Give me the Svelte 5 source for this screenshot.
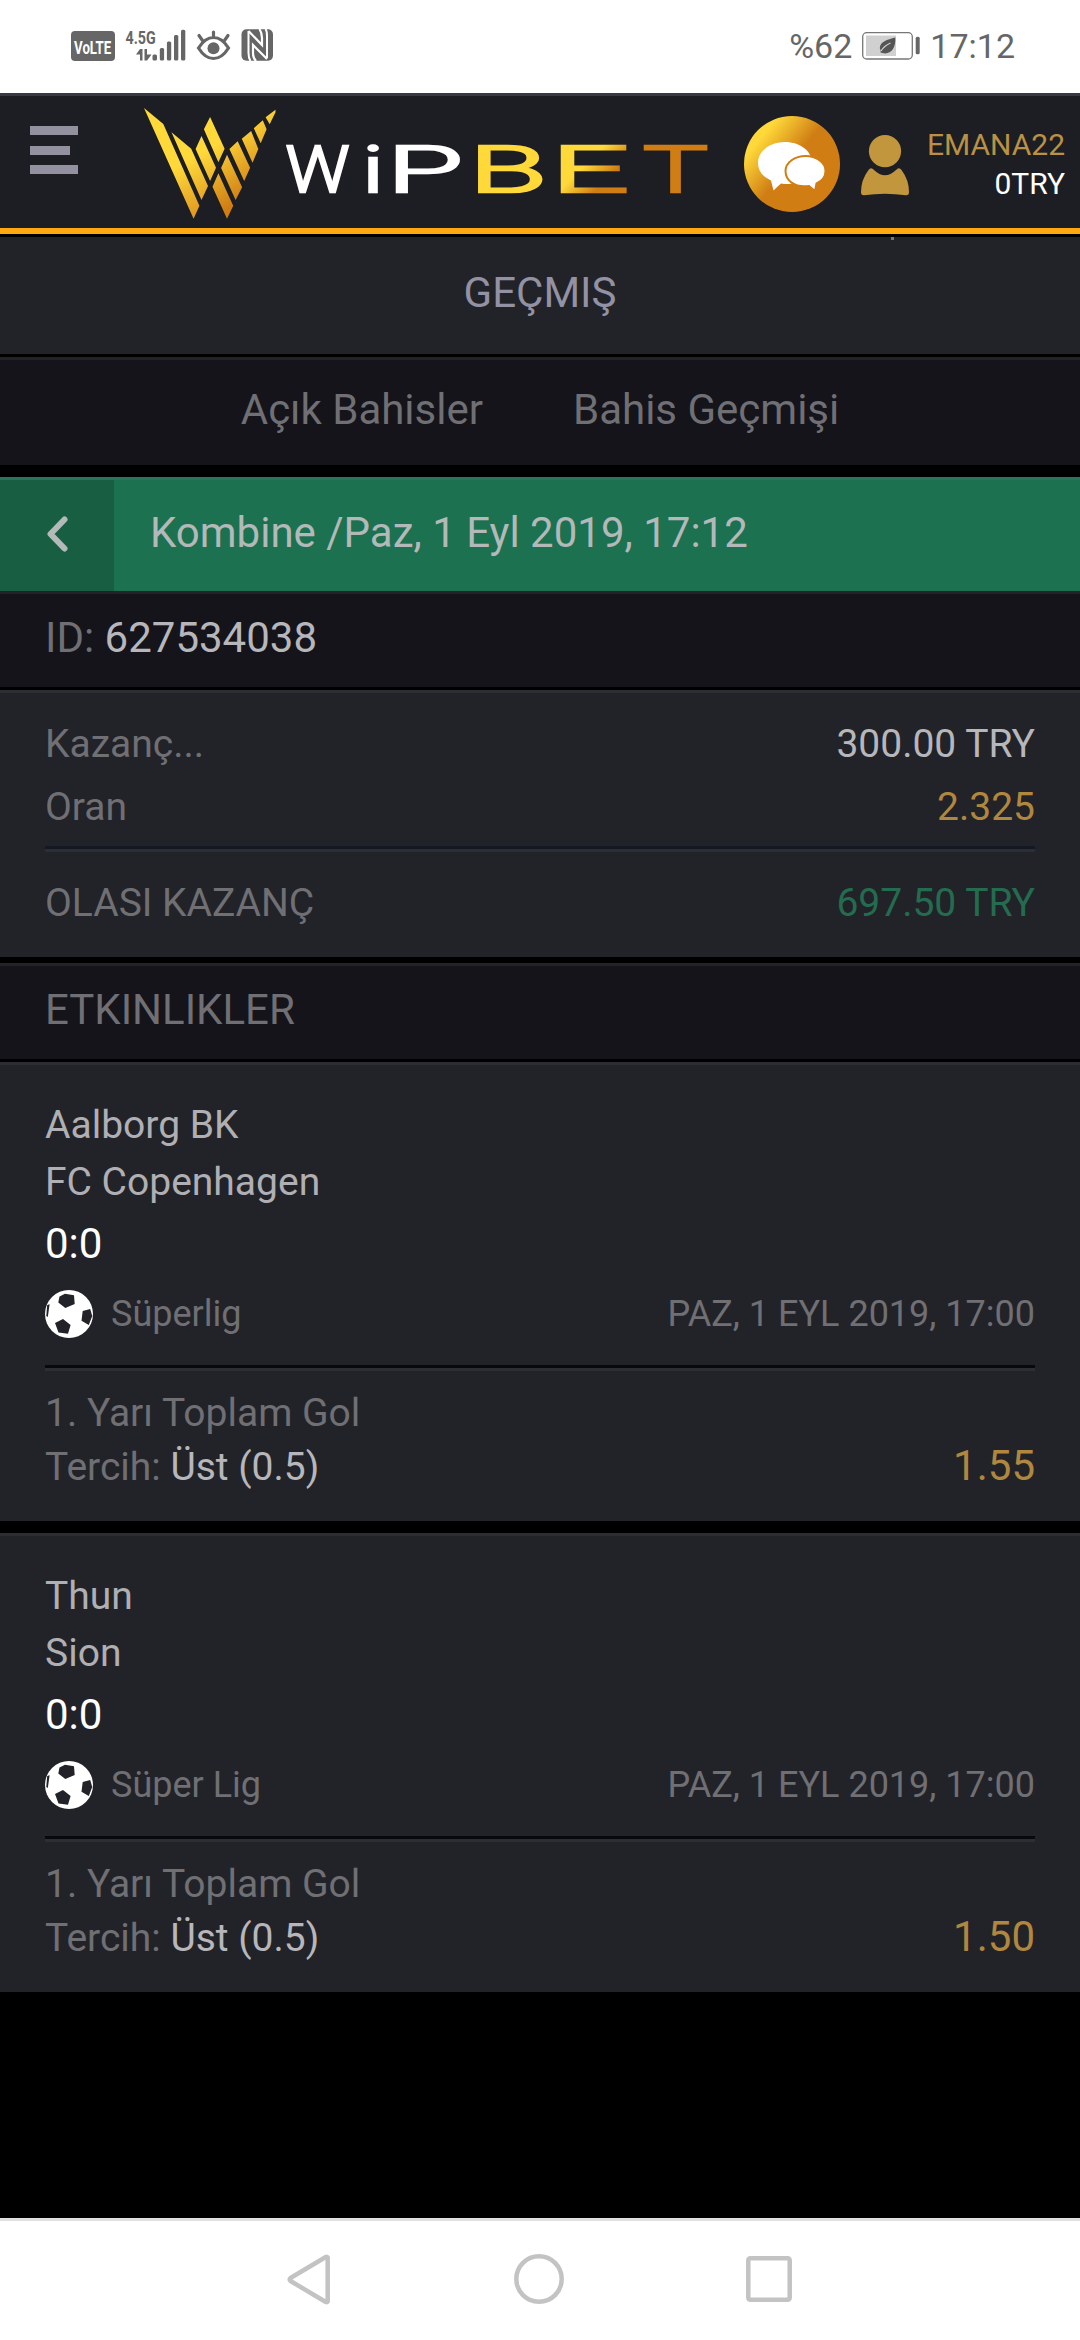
<script lang="ts">
  type Event = {
    home: string;
    away: string;
    score: string;
    league: string;
    date: string;
    market: string;
    pick: string;
    odds: string;
  };

  const tabs = ["Açık Bahisler", "Bahis Geçmişi"];

  const events: Event[] = [
    {
      home: "Aalborg BK",
      away: "FC Copenhagen",
      score: "0:0",
      league: "Süperlig",
      date: "PAZ, 1 EYL 2019, 17:00",
      market: "1. Yarı Toplam Gol",
      pick: "Üst (0.5)",
      odds: "1.55",
    },
    {
      home: "Thun",
      away: "Sion",
      score: "0:0",
      league: "Süper Lig",
      date: "PAZ, 1 EYL 2019, 17:00",
      market: "1. Yarı Toplam Gol",
      pick: "Üst (0.5)",
      odds: "1.50",
    },
  ];

  // x, width and fill of every letter in the wordmark
  const letters = [
    { char: "W", x: 141.5, width: 64, fill: "#fff" },
    { char: "i", x: 218, width: 22, fill: "#fff" },
    { char: "P", x: 243, width: 76, fill: "#fff" },
    { char: "B", x: 325, width: 78, fill: "#ffd93a" },
    { char: "E", x: 407, width: 78, fill: "url(#gold-e)" },
    { char: "T", x: 499, width: 65, fill: "#d07e14" },
  ];
</script>

<div class="screen">
  <div class="status-bar">
    <svg class="status-icons" width="204" height="42" viewBox="70 20 204 42">
      <rect x="71" y="31" width="44" height="30" rx="4" fill="#666" />
      <text class="volte" transform="translate(74 53.500) scale(.7 1)">VoLTE</text>
      <text class="network" transform="translate(125.500 43.500) scale(.75 1)">4.5G</text>
      <g fill="#666">
        <path d="M140 49h2.500v11.500h-2.500v-6h-4zM144.500 49h2.500v5.500h4.500l-4.500 6h-2.500z" />
        <rect x="152.500" y="54.500" width="4.500" height="6" rx="1.500" />
        <rect x="159.800" y="48" width="4.300" height="12.500" rx="1.500" />
        <rect x="166.900" y="41.500" width="4.300" height="19" rx="1.500" />
        <rect x="174" y="35" width="4.300" height="25.500" rx="1.500" />
        <rect x="181" y="29.700" width="4.300" height="30.800" rx="1.500" />
        <circle cx="213.500" cy="48.300" r="6" />
      </g>
      <path
        d="M198.500 48Q205 37.500 213.500 37.500T228.500 48Q222 58.500 213.500 58.500T198.500 48zM213.500 37v-5M202.500 40.500l-3.500-5M224.500 40.500l3.500-5"
        fill="none" stroke="#666" stroke-width="3.200" stroke-linecap="round" />
      <rect x="241.500" y="29.300" width="31.500" height="31.400" rx="5" fill="#666" />
      <path
        d="M248.500 31V53Q248.500 58 250.500 61M265.500 29Q267 31 267 36V58"
        fill="none" stroke="#fff" stroke-width="2" />
      <path d="M248.500 31L262 45V38Q262 33 259.500 29M267 59L253 45V53Q253 58 256 61" fill="none" stroke="#fff" stroke-width="2.200" />
    </svg>
    <div class="status-right">
      <span>%62</span>
      <svg width="58" height="28" viewBox="0 0 58 28">
        <rect x=".7" y=".7" width="49.600" height="26.300" rx="4" fill="none" stroke="#777" stroke-width="1.300" />
        <rect x="4" y="3.500" width="30" height="20.500" fill="#d0d0d0" />
        <rect x="53.700" y="4.800" width="4" height="17.400" rx="1.500" fill="#666" />
        <path d="M33.300 5.500C25 7.500 18 10 17.800 16C18 17 18.500 18 18.700 18.500L18.500 20.500L20.500 21C28 23 34 17 33.300 5.500z" fill="#555" />
        <path d="M19 19Q22 14 28.500 11" fill="none" stroke="#d0d0d0" stroke-width="1.200" />
      </svg>
      <span>17:12</span>
    </div>
  </div>

  <header>
    <div class="burger"><i></i><i></i><i></i></div>

    <svg class="logo" width="566" height="112" viewBox="0 0 566 112">
      <defs>
        <linearGradient id="gold" gradientUnits="userSpaceOnUse" x1="58" y1="42" x2="92" y2="94">
          <stop offset="0" stop-color="#ffd93a" />
          <stop offset="1" stop-color="#d07e14" />
        </linearGradient>
        <linearGradient id="gold-left" gradientUnits="userSpaceOnUse" x1="30" y1="60" x2="62" y2="116">
          <stop offset="0" stop-color="#ffd93a" />
          <stop offset="1" stop-color="#d8891b" />
        </linearGradient>
        <linearGradient id="gold-e" gradientUnits="userSpaceOnUse" x1="440" y1="58" x2="458" y2="76">
          <stop offset="0" stop-color="#ffd93a" />
          <stop offset="1" stop-color="#d07e14" />
        </linearGradient>
      </defs>
      <path
        fill="url(#gold-left)"
        d="M0 0L19.300 16L55.400 97.700L49.600 110.700zM27.500 24.300L47.200 40.700L64 78L57.500 92zM57.500 28L72 59.700L66.100 73L51.600 41zM66.100 9L80.600 40.700L74.400 54.300L59.900 21.300z" />
      <path
        fill="url(#gold)"
        d="M131.500 1.700V4.300L125.700 16.300L121.600 9.300zM118.800 12.300L122.600 21.300L116.700 35.300L109.800 20.300zM107.100 23L114.300 41L108.500 54.700L97.800 30.700zM93.700 33.300L106.100 59.700L100.200 73L85.400 41zM83 46.700L98.100 79.300L91.600 92L77.100 60zM74.400 65.300L89.200 97.700L83 110.700L68.500 78.700z" />
      {#each letters as letter}
        <text
          class="letter"
          x={letter.x}
          y="83.500"
          fill={letter.fill}
          stroke={letter.fill}
          textLength={letter.width}
          lengthAdjust="spacingAndGlyphs">{letter.char}</text>
      {/each}
    </svg>

    <svg class="chat" width="96" height="96" viewBox="0 0 96 96">
      <defs>
        <linearGradient id="chat-gold" x1="0.100" y1="0.150" x2="0.900" y2="0.800">
          <stop offset="0.100" stop-color="#ffd93a" />
          <stop offset="0.500" stop-color="#d07e14" />
        </linearGradient>
      </defs>
      <circle cx="48" cy="48" r="48" fill="url(#chat-gold)" />
      <path d="M41 26C56 26 68 35 68 47S56 68 44 68Q40 68 37 67.500Q34 70 29.500 74.500L27 64.500C19 61 14 55 14 47C14 35 26 26 41 26z" fill="#fff" />
      <path
        d="M61.500 40C72 40 81.500 46.500 81.500 55C81.500 60 78 65 72.500 67.500L71 75L65 70C50 72 41.500 64 41.500 55C41.500 46.500 51 40 61.500 40z"
        fill="#fff" stroke="#d07e14" stroke-width="2" />
    </svg>

    <svg class="person" width="48" height="61" viewBox="0 0 48 61" fill="#c2963d">
      <circle cx="24" cy="16.200" r="16.100" />
      <path d="M7.500 35Q10 31.500 13 35Q24 45.500 35 35Q38 31.500 40.500 35Q48 45 48 57Q48 60.500 45 60.300Q24 57 3 60.300Q0 60.500 0 57Q0 45 7.500 35z" />
    </svg>

    <div class="account">
      <div class="name">EMANA22</div>
      <div>0TRY</div>
    </div>
  </header>

  <main>
    <h1>GEÇMIŞ<i class="tick"></i></h1>

    <nav class="tabs">
      {#each tabs as tab}
        <span>{tab}</span>
      {/each}
    </nav>

    <div class="slip-title">
      <div class="back">
        <svg width="22" height="36" viewBox="0 0 22 36">
          <path d="M18.500 3.500L4.500 18L18.500 32.500" fill="none" stroke="#b3bab8" stroke-width="6" stroke-linecap="round" stroke-linejoin="round" />
        </svg>
      </div>
      <div class="slip-name">Kombine /Paz, 1 Eyl 2019, 17:12</div>
    </div>

    <div class="strip">ID:&nbsp;<b>627534038</b></div>

    <section class="summary">
      <div class="row"><span>Kazanç...</span><b>300.00 TRY</b></div>
      <div class="row"><span>Oran</span><span class="gold">2.325</span></div>
      <div class="row total"><span>OLASI KAZANÇ</span><span class="green">697.50 TRY</span></div>
    </section>

    <div class="strip section">ETKINLIKLER</div>

    {#each events as event}
      <section class="event">
        <div class="team">{event.home}</div>
        <div class="team">{event.away}</div>
        <div class="score">{event.score}</div>
        <div class="league">
          <svg width="48" height="48" viewBox="0 0 48 48">
            <circle cx="24" cy="24" r="24" fill="#fff" />
            <path
              d="M14.500 6.500L20 3.800L29 5.200L29.700 14L20.300 18L13.300 12.500zM37.700 21L45.200 19L47.200 26L43.800 35L36.500 30.800zM10 33L18 29L25.600 35L23 43.700L13.500 42.600zM2.200 15L4.600 14.300L2.800 27L1.300 26z"
              fill="#222328" />
          </svg>
          <span>{event.league}</span>
          <span class="date">{event.date}</span>
        </div>
        <div class="bet">
          <div>{event.market}</div>
          <div class="pick">
            <span>Tercih: <b>{event.pick}</b></span>
            <span class="odds">{event.odds}</span>
          </div>
        </div>
      </section>
    {/each}
  </main>

  <footer>
    <svg width="44" height="51" viewBox="0 0 44 51">
      <path d="M40.700 3.500V47.500Q40 48.500 38.800 48L3.500 27Q2 25.500 3.500 24L38.800 3Q40 2.500 40.700 3.500z" />
    </svg>
    <svg width="50" height="50" viewBox="0 0 50 50"><circle cx="25" cy="25" r="22.700" /></svg>
    <svg width="46" height="46" viewBox="0 0 46 46"><rect x="2.300" y="2.300" width="41.400" height="41.400" rx="2" /></svg>
  </footer>
</div>

<style>
  :global(body) {
    margin: 0;
    background: #000;
  }
  .screen {
    display: flex;
    flex-direction: column;
    width: 1080px;
    height: 2340px;
    background: #000;
    color: #6f6f74;
    font-family: Roboto, sans-serif;
    font-size: 42px;
    white-space: nowrap;
    overflow: hidden;
  }
  b,
  h1 {
    font-weight: normal;
  }
  b {
    color: #b7b6bb;
  }
  svg {
    display: block;
    flex: none;
  }

  .status-bar {
    display: flex;
    justify-content: space-between;
    box-sizing: border-box;
    height: 93px;
    padding: 20px 65px 0 70px;
    background: #fff;
  }
  .status-right {
    display: flex;
    align-items: center;
    gap: 10px;
    height: 52px;
    color: #666;
    font-size: 34px;
  }
  .volte {
    fill: #fff;
    font: bold 19px Roboto, sans-serif;
  }
  .network {
    fill: #666;
    font: bold 19px Roboto, sans-serif;
  }

  header {
    display: flex;
    align-items: flex-start;
    height: 132px;
    border-top: 3px solid #373943;
    border-bottom: 6px solid #ffa80f;
    background: #1d1e23;
  }
  .burger {
    display: flex;
    flex-direction: column;
    gap: 10.500px;
    width: 48px;
    margin: 30px 66px 0 30px;
  }
  .burger i {
    height: 9px;
    background: #9391a0;
  }
  .burger i:nth-child(2) {
    width: 40px;
  }
  .logo {
    margin-top: 12px;
  }
  .letter {
    font: 300 65px Roboto, sans-serif;
    stroke-width: 2.500;
  }
  .chat {
    margin: 20px 0 0 34px;
  }
  .person {
    margin: 38.500px 0 0 21px;
  }
  .account {
    flex: 1;
    margin: 29px 15px 0 0;
    color: #fff;
    font-size: 30px;
    line-height: 39px;
    text-align: right;
  }
  .name {
    color: #bb9145;
  }

  h1 {
    position: relative;
    margin: 3px 0;
    height: 117px;
    background: #222328;
    color: #9391a4;
    font-size: 42px;
    line-height: 111px;
    text-align: center;
  }
  .tick {
    position: absolute;
    top: 0;
    left: 891px;
    width: 3px;
    height: 3px;
    background: #77777c;
  }
  .tabs {
    display: flex;
    justify-content: center;
    gap: 90px;
    height: 105px;
    border-top: 3px solid #222227;
    background: #15141a;
    line-height: 99px;
  }
  .slip-title {
    display: flex;
    height: 111px;
    margin-top: 12px;
    border-top: 3px solid #2a7559;
    background: #1c7150;
  }
  .back {
    display: flex;
    align-items: center;
    box-sizing: border-box;
    width: 114px;
    padding: 0 0 4px 46px;
    background: #175e42;
  }
  .slip-name {
    padding-left: 36px;
    color: #b3b8b9;
    line-height: 105px;
  }
  .strip {
    height: 93px;
    padding: 0 45px;
    border-top: 3px solid #222227;
    background: #15141a;
    line-height: 87px;
  }
  .section {
    margin-top: 6px;
  }

  .summary {
    height: 244px;
    margin-top: 3px;
    padding: 20px 45px 0;
    border-top: 3px solid #2d2e33;
    background: #222328;
    font-size: 39px;
    line-height: 63px;
  }
  .row {
    display: flex;
    justify-content: space-between;
  }
  .total {
    margin-top: 7px;
    border-top: 3px solid #131822;
    box-shadow: inset 0 3px #2d2e33;
    line-height: 109px;
  }
  .gold,
  .odds {
    color: #b0873f;
  }
  .green {
    color: #246c50;
  }

  .event {
    height: 424px;
    margin-top: 12px;
    padding: 32px 45px 0;
    border-top: 3px solid #2d2e33;
    background: #222328;
    font-size: 39px;
  }
  .section + .event {
    margin-top: 3px;
  }
  .team,
  .score {
    line-height: 57px;
  }
  .team {
    color: #b0afb4;
  }
  .score {
    margin: 4px 0 18px;
    color: #fff;
    font-size: 42px;
  }
  .league {
    display: flex;
    align-items: center;
    gap: 18px;
    height: 48px;
    font-size: 36px;
  }
  .date {
    margin-left: auto;
  }
  .bet {
    margin-top: 27px;
    padding-top: 18px;
    border-top: 3px solid #08080f;
    box-shadow: inset 0 3px #2d2e33;
    line-height: 54px;
  }
  .pick {
    display: flex;
    justify-content: space-between;
    align-items: baseline;
    margin-top: -1px;
  }
  .odds {
    font-size: 42px;
  }

  footer {
    display: flex;
    justify-content: space-between;
    align-items: center;
    box-sizing: border-box;
    height: 122px;
    margin-top: auto;
    padding: 0 288px 3px 287px;
    border-top: 3px solid #e0e0e0;
    background: #fff;
  }
  footer svg {
    fill: none;
    stroke: #c3c3c3;
    stroke-width: 4.500;
    stroke-linejoin: round;
  }
</style>
